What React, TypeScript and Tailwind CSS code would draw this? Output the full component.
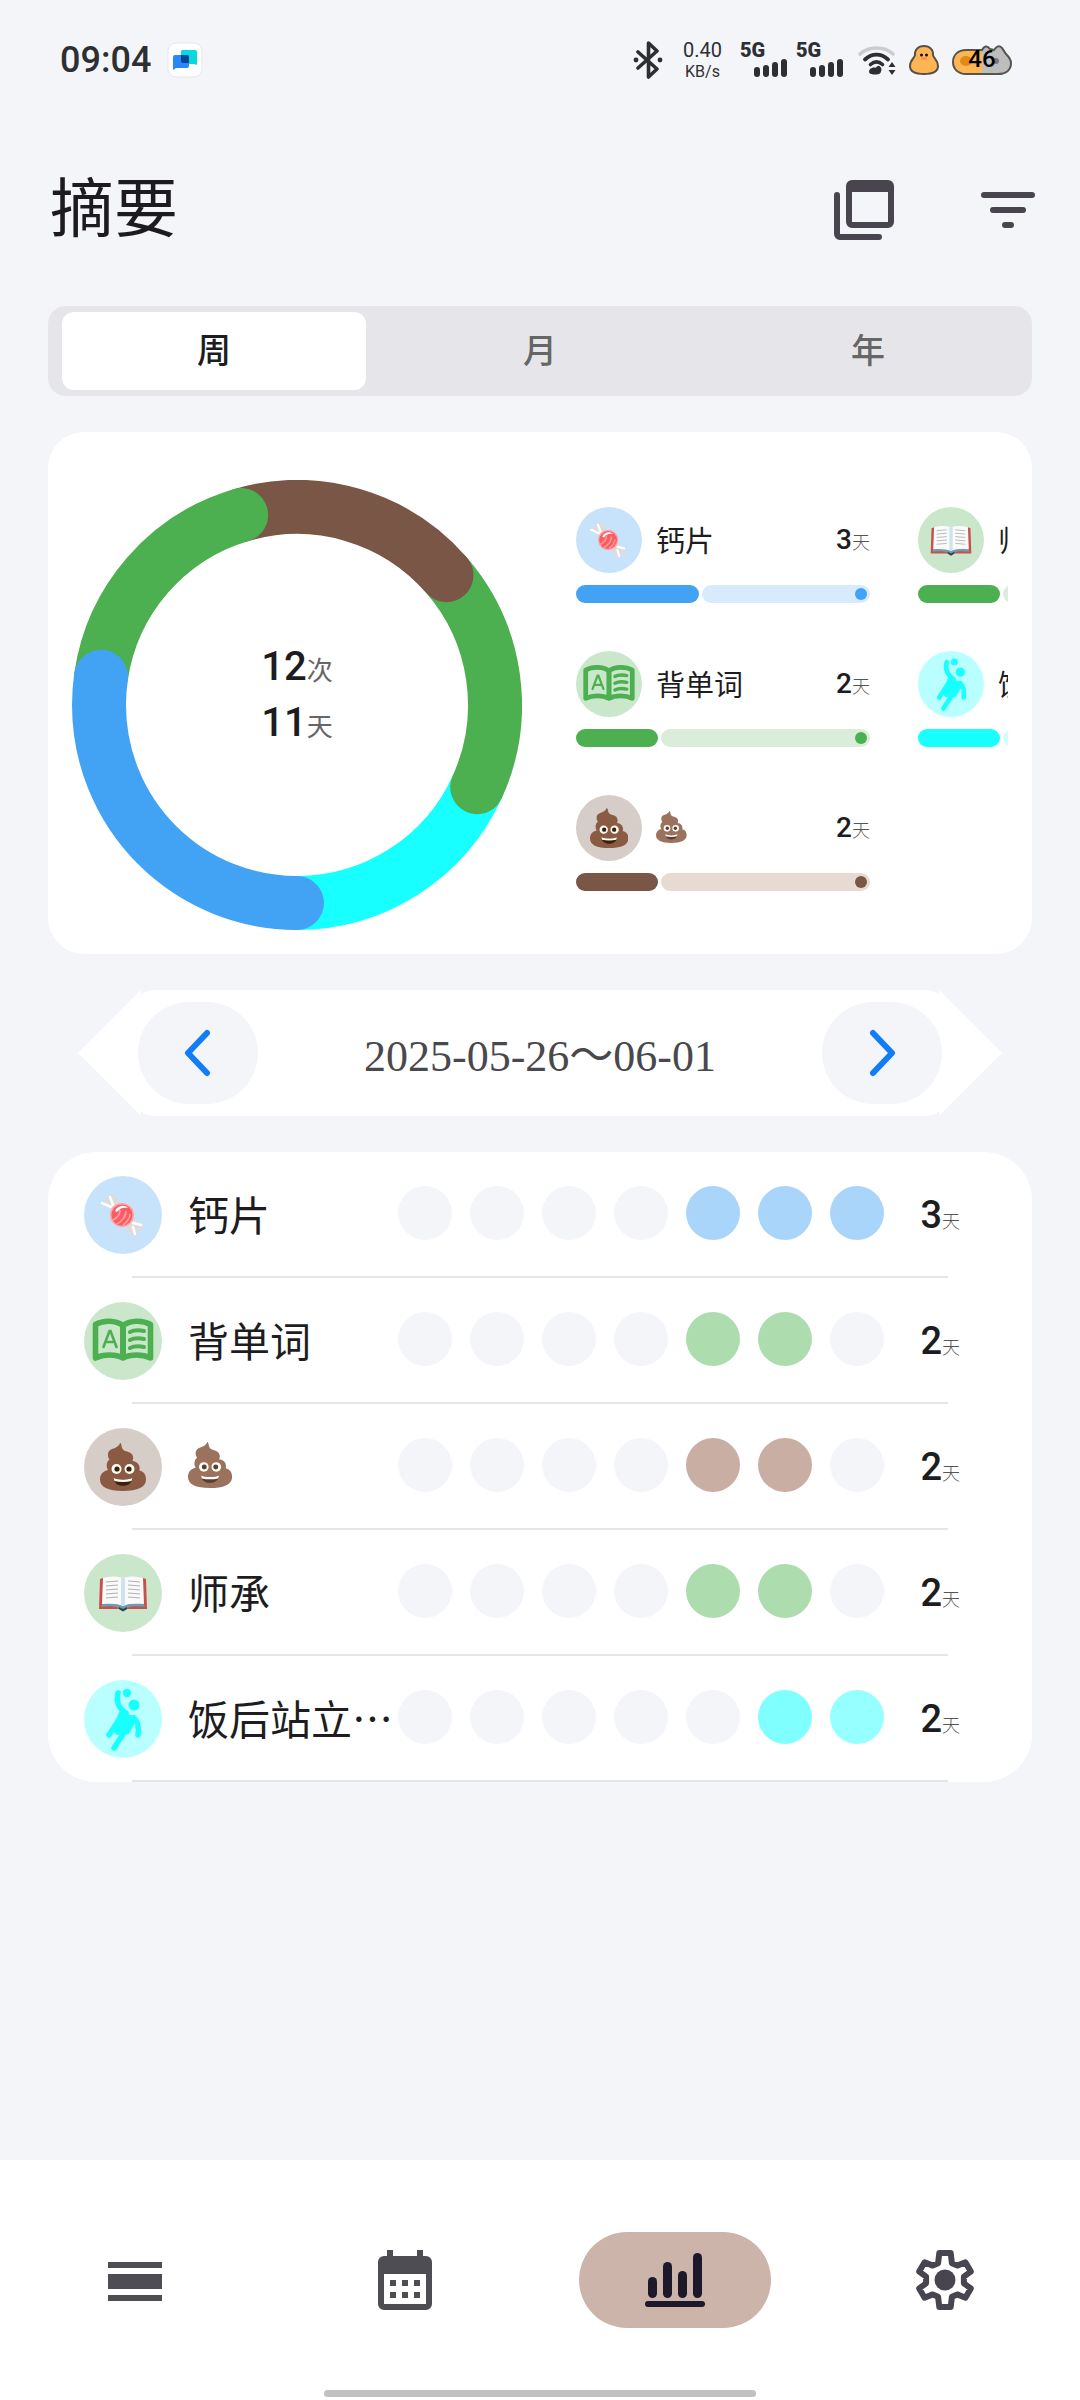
import { useState } from 'react';
import type { ReactNode } from 'react';

type IconName = 'candy' | 'words' | 'poop' | 'book' | 'ball';

type Habit = {
  icon: IconName;
  name: string;
  days: number;
  color: string;
  soft: string;
  track: string;
  week: string[];
};

const EMPTY = '#f3f5f9';

const habits: Habit[] = [
  {
    icon: 'candy',
    name: '钙片',
    days: 3,
    color: '#42a3f5',
    soft: '#c7e3fc',
    track: '#d8ebfd',
    week: [EMPTY, EMPTY, EMPTY, EMPTY, '#a9d5fa', '#a9d5fa', '#a9d5fa'],
  },
  {
    icon: 'words',
    name: '背单词',
    days: 2,
    color: '#4caf50',
    soft: '#cae7cb',
    track: '#d9edda',
    week: [EMPTY, EMPTY, EMPTY, EMPTY, '#addcaf', '#addcaf', EMPTY],
  },
  {
    icon: 'poop',
    name: '💩',
    days: 2,
    color: '#795646',
    soft: '#d6ccc8',
    track: '#e7dad3',
    week: [EMPTY, EMPTY, EMPTY, EMPTY, '#c8aea3', '#c8aea3', EMPTY],
  },
  {
    icon: 'book',
    name: '师承',
    days: 2,
    color: '#4caf50',
    soft: '#cae7cb',
    track: '#d9edda',
    week: [EMPTY, EMPTY, EMPTY, EMPTY, '#addcaf', '#addcaf', EMPTY],
  },
  {
    icon: 'ball',
    name: '饭后站立…',
    days: 2,
    color: '#18ffff',
    soft: '#baffff',
    track: '#d1ffff',
    week: [EMPTY, EMPTY, EMPTY, EMPTY, EMPTY, '#80ffff', '#96ffff'],
  },
];

// clockwise from the top, later arcs lie over the earlier ones
const arcs = [
  { start: 114.5, sweep: 65.5, color: '#18ffff' },
  { start: 49, sweep: 65.5, color: '#4caf50' },
  { start: -16.4, sweep: 65.4, color: '#795646' },
  { start: -81.8, sweep: 65.4, color: '#4caf50' },
  { start: -180, sweep: 98.2, color: '#42a3f5' },
];

const Poop = ({ className }: { className: string }) => (
  <svg viewBox="0 0 46 48" className={className} aria-hidden="true">
    <path
      d="M20 0c2 0 .8 4.600 3.500 7 2.500 2 8.500 1.500 9.500 6.500.4 2 0 3.500-.6 4.500 5 .5 8.200 4 7 9.500 4.500 1 6.600 4 6.600 9C46 44 38 48 23 48S0 44 0 36.500c0-5 3-8.500 8-9.500-2.500-4-1-9 1.500-10.500-2-2.500-2.600-8 1.500-10C16 4.500 19 3.500 20 0Z"
      fill="#8a5a43"
    />
    <circle cx="16.500" cy="26" r="5" fill="#fffdf5" />
    <circle cx="29.500" cy="26" r="5" fill="#fffdf5" />
    <circle cx="17" cy="26" r="2.600" fill="#3b1f0c" />
    <circle cx="29" cy="26" r="2.600" fill="#3b1f0c" />
    <path d="M13.500 35c6 2.200 13 2.200 19 0-.4 5-4.500 7.800-9.500 7.800S14 40 13.500 35Z" fill="#3b1f0c" />
    <path d="M13.500 35c6 2.200 13 2.200 19 0l-1 3c-5.500 1.300-11.500 1.300-17 0Z" fill="#fffdf5" />
  </svg>
);

const Candy = () => (
  <svg viewBox="0 0 78 78" className="size-full" aria-hidden="true">
    <path d="M30 34 17 29l3-3-1-2 4-1 1-4 3 1 3-3 1 4 3 1 1 9Z" fill="#dcdcdc" />
    <path d="m46 44 14 4-2 4 1 2-5 1-1 5-3-1-2 2-2-5-3-2-1-5Z" fill="#dcdcdc" />
    <path d="m18 27 9 4M26 21l3 8M57 49l-8-2M51 58l-2-7" stroke="#fff" strokeWidth="2.600" strokeLinecap="round" />
    <circle cx="38" cy="39" r="12" fill="#ffa3a3" />
    <circle cx="38" cy="39" r="10.500" fill="#fa5c63" />
    <path d="M29 44c4-2 7-6 7-10M33 48c5-3 9-8 9-13M39 49c4-3 7-7 7-11" fill="none" stroke="#ff9a9a" strokeWidth="1.800" />
    <path d="M31 35c2-5 9-7 13-3-5-1-8 0-11 4Z" fill="#fff" />
  </svg>
);

const WordsBook = () => (
  <svg viewBox="0 0 78 78" className="size-full" aria-hidden="true">
    <path
      d="M11.500 22.500c8-4.500 20-4.500 27.500 1 7.500-5.500 19.500-5.500 27.500-1V56c-8-4-20-4-27.500 0-7.500-4-19.500-4-27.500 0Z"
      fill="none"
      stroke="#4caf50"
      strokeWidth="5.600"
      strokeLinejoin="round"
    />
    <path d="M39 24v33" stroke="#4caf50" strokeWidth="6" />
    <path d="m19.500 45 6-16h1l6 16M22 40h8" fill="none" stroke="#4caf50" strokeWidth="2.600" strokeLinecap="round" />
    <path d="M46 30c4-2 9-2 14-1M46 38c4-2 9-2 14-1M46 46c4-2 9-2 14-1" fill="none" stroke="#4caf50" strokeWidth="4" strokeLinecap="round" />
  </svg>
);

const OpenBook = () => (
  <svg viewBox="0 0 78 78" className="size-full" aria-hidden="true">
    <path d="m16 25 3-1v27l40-1V24l3 1 1 30H43l-4 2-4-2H15Z" fill="#c8504c" />
    <path d="m19 49 20 2 20-2 2 4c-8-1-14-1-18 1l-4 2-4-2c-5-2-11-2-18-1Z" fill="#6f9bb5" />
    <path d="M19 24c7-2 14-2 20 0 6-2 13-2 20 0l1 26c-8-1-15-1-21 2-6-3-13-3-21-2Z" fill="#fafafa" />
    <path d="M37 23.500 39 24l2-.5V51l-2 1-2-1Z" fill="#cfe3ee" />
    <path
      d="M22 28l12-1M22 32l12-1M22 36l12-1M22 40l12-1M22 44l12-1M44 27l12 1M44 31l12 1M44 35l12 1M44 39l12 1M44 43l12 1"
      stroke="#b0b0b0"
      strokeWidth="1"
    />
    <path d="m35 53 4 2 4-2v2l-4 2.500-4-2.500Z" fill="#29434e" />
  </svg>
);

const BallPlayer = () => (
  <svg viewBox="0 0 78 78" className="size-full" aria-hidden="true">
    <circle cx="43" cy="13" r="4.200" fill="#18ffff" />
    <circle cx="50" cy="25" r="5.500" fill="#18ffff" />
    <path d="M34 13c-2 8 0 15 8 20" fill="none" stroke="#18ffff" strokeWidth="5.500" strokeLinecap="round" />
    <path d="M36 30c5 3 9 6 14 5l2 6-7 13-12 1-5-5Z" fill="#18ffff" />
    <path d="M50 38c4 4 5 10 4 17" fill="none" stroke="#18ffff" strokeWidth="5.500" strokeLinecap="round" />
    <path d="M36 38 25 55M43 48 30 68" stroke="#18ffff" strokeWidth="5.500" strokeLinecap="round" />
  </svg>
);

const HabitIcon = ({ habit, size }: { habit: Habit; size: 'sm' | 'lg' }) => (
  <span
    className={
      size === 'lg'
        ? 'flex size-[78px] shrink-0 items-center justify-center rounded-full'
        : 'flex size-[66px] shrink-0 items-center justify-center rounded-full'
    }
    style={{ backgroundColor: habit.soft }}
  >
    {habit.icon === 'candy' && <Candy />}
    {habit.icon === 'words' && <WordsBook />}
    {habit.icon === 'book' && <OpenBook />}
    {habit.icon === 'ball' && <BallPlayer />}
    {habit.icon === 'poop' && <Poop className={size === 'lg' ? 'h-12' : 'h-10'} />}
  </span>
);

const Days = ({ days, className }: { days: number; className: string }) => (
  <span className="flex shrink-0 items-baseline whitespace-nowrap">
    <span className={className}>{days}</span>
    <span className="text-[18px] font-light text-[#555]">天</span>
  </span>
);

const Signal = () => (
  <span className="flex h-9 w-[48px] flex-col">
    <span className="text-[20px] leading-4 font-black">5G</span>
    <svg viewBox="0 0 34 20" className="h-5 w-[34px] self-end" fill="#2e2f33" aria-hidden="true">
      <rect x="0" y="9" width="6" height="10" rx="3" />
      <rect x="9" y="7" width="6" height="12" rx="3" />
      <rect x="18" y="4" width="6" height="15" rx="3" />
      <rect x="27" y="1" width="6" height="18" rx="3" />
    </svg>
  </span>
);

const StatusBar = () => (
  <div className="flex h-[120px] items-center justify-between pr-[68px] pl-[60px] text-[#2e2f33]">
    <div className="flex items-center gap-4">
      <span className="text-[36px] leading-none font-medium">09:04</span>
      <svg viewBox="0 0 36 36" className="size-9" aria-hidden="true">
        <rect x="1" y="1" width="34" height="34" rx="8" fill="#fff" stroke="#e6e7ea" />
        <path d="M15 8h13a2 2 0 0 1 2 2v13l-3-1H16a2 2 0 0 1-2-2V9Z" fill="#04dadd" />
        <path d="M8 13h12a2 2 0 0 1 2 2v9a2 2 0 0 1-2 2H9l-3 2V15a2 2 0 0 1 2-2Z" fill="#2a86fb" />
        <path d="M14 13h6a2 2 0 0 1 2 2v6h-6a2 2 0 0 1-2-2Z" fill="#04459c" />
      </svg>
    </div>
    <div className="flex items-center">
      <svg viewBox="0 0 30 38" className="h-[38px] w-[30px]" aria-hidden="true">
        <path d="m5 11 19 17-8.500 8V2L24 10 5 27" fill="none" stroke="#2e2f33" strokeWidth="3.600" strokeLinejoin="round" strokeLinecap="round" />
        <circle cx="3" cy="19" r="2.400" fill="#2e2f33" />
        <circle cx="27" cy="19" r="2.400" fill="#2e2f33" />
      </svg>
      <span className="ml-5 flex flex-col items-center text-[20px] leading-6">
        <span>0.40</span>
        <span className="text-[16px] leading-5">KB/s</span>
      </span>
      <span className="ml-[18px] flex gap-2">
        <Signal />
        <Signal />
      </span>
      <svg viewBox="0 0 38 32" className="ml-[14px] h-8 w-[38px]" fill="none" strokeLinecap="round" aria-hidden="true">
        <path d="M2 10c9-8 24-8 33 0" stroke="#cbccd0" strokeWidth="3.600" />
        <path d="M7 15.500c7-6.500 16-6.500 23 0" stroke="#2e2f33" strokeWidth="3.800" />
        <path d="M12.500 20.500c4-3.500 8-3.500 12 0" stroke="#2e2f33" strokeWidth="3.600" />
        <path d="M14 24c2-1 3 0 4-.5 1-1 3-2.500 4-1 1.500 1 2 3 1 5-.5 3-4 3-6 3s-6 0-6-3c0-1.500 1-3 3-3.500Z" fill="#2e2f33" />
        <path d="m34 18 3.500 5h-7ZM34 31l3.500-5h-7Z" fill="#2e2f33" />
      </svg>
      <svg viewBox="0 0 32 32" className="ml-3 size-8" aria-hidden="true">
        <path d="M16 2c6 0 9.500 4 9 9 0 2.500 5 5 5 11s-5 8-14 8-14-2-14-8 5-8.500 5-11c-.5-5 3-9 9-9Z" fill="#ffb552" stroke="#55504b" strokeWidth="2" />
        <circle cx="13.500" cy="11" r="1.500" fill="#111" />
        <circle cx="18.500" cy="11" r="1.500" fill="#111" />
        <ellipse cx="16" cy="14.500" rx="3" ry="1.400" fill="#ff8a5c" />
      </svg>
      <span className="relative ml-3 block h-8 w-[60px]">
        <svg viewBox="0 0 60 32" className="h-8 w-[60px]" aria-hidden="true">
          <path d="M14 6h16c2-4 5-5 8-1l4 1c3-4 5-5 8-2l4 6c3 3 5 5 5 9 0 7-5 11-13 11H14C6 30 1 25 1 18S6 6 14 6Z" fill="#bdbdbd" />
          <path d="M14 6h16v24H14C6 30 1 25 1 18S6 6 14 6Z" fill="#ffb552" />
          <ellipse cx="14" cy="17" rx="6" ry="5" fill="#e08a1c" />
          <circle cx="44" cy="17" r="3" fill="#777" />
          <path d="M14 6h16c2-4 5-5 8-1l4 1c3-4 5-5 8-2l4 6c3 3 5 5 5 9 0 7-5 11-13 11H14C6 30 1 25 1 18S6 6 14 6Z" fill="none" stroke="#55544f" strokeWidth="2" />
        </svg>
        <span className="absolute inset-0 text-center text-[24px] leading-[30px] font-medium text-black">46</span>
      </span>
    </div>
  </div>
);

const Donut = () => (
  <div className="relative aspect-square w-[450px] shrink-0">
    <svg viewBox="0 0 450 450" className="size-full" aria-hidden="true">
      {arcs.map((arc) => (
        <circle
          key={arc.start}
          cx="225"
          cy="225"
          r="198"
          fill="none"
          stroke={arc.color}
          strokeWidth="54"
          strokeLinecap="round"
          pathLength={360}
          strokeDasharray={`${arc.sweep} 360`}
          transform={`rotate(${arc.start - 90} 225 225)`}
        />
      ))}
    </svg>
    <div className="absolute inset-0 flex flex-col items-center justify-center pb-5 text-[#1d1d1f]">
      <p className="text-[40px] leading-[56px] font-medium">
        12<span className="text-[26px] leading-none font-normal text-[#666]">次</span>
      </p>
      <p className="text-[40px] leading-[56px] font-medium">
        11<span className="text-[26px] leading-none font-normal text-[#666]">天</span>
      </p>
    </div>
  </div>
);

const SummaryItem = ({ habit }: { habit: Habit }) => (
  <li className="flex flex-col gap-3">
    <div className="flex items-center">
      <HabitIcon habit={habit} size="sm" />
      <span className="ml-[14px] flex-1 pb-[2px] font-['Noto_Sans_CJK_SC',sans-serif] text-[29px] leading-[44px] whitespace-nowrap text-[#1d1d1f]">
        {habit.icon === 'poop' ? <Poop className="h-8 opacity-85" /> : habit.name}
      </span>
      <Days days={habit.days} className="text-[28px] leading-9 font-medium text-[#1d1d1f]" />
    </div>
    <div className="flex h-[18px] gap-[3px]">
      <span className="rounded-full" style={{ backgroundColor: habit.color, width: `${(habit.days / 7) * 98}%` }} />
      <span className="flex flex-1 items-center justify-end rounded-full pr-[3px]" style={{ backgroundColor: habit.track }}>
        <span className="size-3 rounded-full" style={{ backgroundColor: habit.color }} />
      </span>
    </div>
  </li>
);

const HabitRow = ({ habit }: { habit: Habit }) => (
  <li>
    <div className="flex h-[124px] items-center pt-[2px] pr-[72px] pl-9">
      <HabitIcon habit={habit} size="lg" />
      <span className="ml-[26px] min-w-0 flex-1 overflow-hidden pb-1 font-['Noto_Sans_CJK_SC',sans-serif] text-[41px] leading-[60px] whitespace-nowrap text-[#1d1d1f]">
        {habit.icon === 'poop' ? <Poop className="h-[46px] opacity-85" /> : habit.name}
      </span>
      <span className="flex gap-[18px] pb-1">
        {habit.week.map((color, i) => (
          <span key={i} className="size-[54px] rounded-full" style={{ backgroundColor: color }} />
        ))}
      </span>
      <span className="ml-9">
        <Days days={habit.days} className="text-[38px] leading-[52px] font-medium text-[#1d1d1f]" />
      </span>
    </div>
    <div className="mr-[84px] ml-[84px] h-[2px] bg-[#e6e6e8]" />
  </li>
);

const NavIcon = ({ children, color = '#4f4d54' }: { children: ReactNode; color?: string }) => (
  <svg viewBox="0 0 24 24" className="size-[72px]" fill={color} aria-hidden="true">
    {children}
  </svg>
);

const navItems = [
  {
    label: '列表',
    icon: (
      <NavIcon>
        <path d="M3 6h18v2H3zM3 10h18v5H3zM3 17h18v2H3z" />
      </NavIcon>
    ),
  },
  {
    label: '日历',
    icon: (
      <NavIcon>
        <path
          fillRule="evenodd"
          d="M6 2h2v2h8V2h2v2h1a2 2 0 0 1 2 2v14a2 2 0 0 1-2 2H5a2 2 0 0 1-2-2V6a2 2 0 0 1 2-2h1ZM5 10v10h14V10Z"
        />
        <path d="M7 12h2v2H7zM11 12h2v2h-2zM15 12h2v2h-2zM7 16h2v2H7zM11 16h2v2h-2zM15 16h2v2h-2z" />
      </NavIcon>
    ),
  },
  {
    label: '摘要',
    icon: (
      <NavIcon color="#1d192b">
        <rect x="3" y="11" width="3" height="7" rx="1.500" />
        <rect x="8" y="6" width="3" height="12" rx="1.500" />
        <rect x="13" y="9" width="3" height="9" rx="1.500" />
        <rect x="18" y="3" width="3" height="15" rx="1.500" />
        <rect x="2" y="19" width="20" height="2" rx="1" />
      </NavIcon>
    ),
  },
  {
    label: '设置',
    icon: (
      <NavIcon color="#49454f">
        <path
          d="M10.100 3h3.800l.4 3.400 1.800.8 2.700-1.100 1.800 3.100-2.300 1.700v2.200l2.300 1.700-1.800 3.100-2.700-1.100-1.800.8-.4 3.400h-3.800l-.4-3.400-1.800-.8-2.700 1.100-1.800-3.100 2.300-1.700v-2.200L3.400 9.200l1.800-3.100 2.700 1.100 1.800-.8Z"
          fill="none"
          stroke="#49454f"
          strokeWidth="2"
          strokeLinejoin="round"
        />
        <circle cx="12" cy="12" r="3.500" />
      </NavIcon>
    ),
  },
];

const App = () => {
  const [period, setPeriod] = useState('周');
  const [page, setPage] = useState('摘要');

  return (
    <div className="flex min-h-screen flex-col bg-[#f3f5f9] font-['Roboto','Noto_Sans_CJK_SC',sans-serif]">
      <StatusBar />

      <header className="flex h-[180px] items-center justify-between pr-9 pl-[50px]">
        <h1 className="text-[64px] leading-none text-[#1d1b20]">摘要</h1>
        <div className="flex gap-[72px]">
          <button type="button" aria-label="窗口">
            <NavIcon color="#49454f">
              <path fillRule="evenodd" d="M8 2h12a2 2 0 0 1 2 2v12a2 2 0 0 1-2 2H8a2 2 0 0 1-2-2V4a2 2 0 0 1 2-2Zm0 4v10h12V6Z" />
              <path d="M2 7a1 1 0 0 1 2 0v13h13a1 1 0 0 1 0 2H4a2 2 0 0 1-2-2Z" />
            </NavIcon>
          </button>
          <button type="button" aria-label="筛选">
            <NavIcon color="#49454f">
              <rect x="3" y="6" width="18" height="2" rx="1" />
              <rect x="6" y="11" width="12" height="2" rx="1" />
              <rect x="10" y="16" width="4" height="2" rx="1" />
            </NavIcon>
          </button>
        </div>
      </header>

      <main className="flex flex-col gap-9 px-12 pt-[6px]">
        <div className="grid h-[90px] grid-cols-3 rounded-[18px] bg-[#e6e6ea]">
          {['周', '月', '年'].map((item) => (
            <button
              key={item}
              type="button"
              onClick={() => setPeriod(item)}
              className={
                period === item
                  ? 'my-[6px] mr-[10px] ml-[14px] rounded-xl bg-white text-[34px] font-medium text-[#1d1d1f]'
                  : 'mx-3 my-[6px] rounded-xl text-[34px] font-medium text-[#666]'
              }
            >
              {item}
            </button>
          ))}
        </div>

        <section className="flex items-center gap-[54px] rounded-[36px] bg-white px-6 pt-12 pb-6">
          <Donut />
          <ul className="grid min-w-0 flex-1 auto-cols-[294px] grid-flow-col grid-rows-3 gap-12 overflow-hidden pb-3">
            {habits.map((habit) => (
              <SummaryItem key={habit.name} habit={habit} />
            ))}
          </ul>
        </section>

        {/* the body stays above the two arrow tips, which reach under it */}
        <div className="flex items-center px-[30px]">
          <span className="-mr-[15px] h-[126px] w-[63px] shrink-0 bg-white [clip-path:polygon(100%_0,100%_100%,0_50%)]" />
          <div className="z-10 flex h-[126px] flex-1 items-center justify-between rounded-[30px] bg-white px-3">
            <button type="button" aria-label="上一周" className="flex h-[102px] w-[120px] items-center justify-center rounded-full bg-[#f3f5f9]">
              <svg viewBox="0 0 30 48" className="h-12 w-[30px]" aria-hidden="true">
                <path d="M24 4 5 24l19 20" fill="none" stroke="#127df7" strokeWidth="6" strokeLinecap="round" strokeLinejoin="round" />
              </svg>
            </button>
            <span className="pt-2 font-['Liberation_Serif','Noto_Sans_CJK_SC',serif] text-[44px] leading-none text-[#49494d]">
              2025-05-26～06-01
            </span>
            <button type="button" aria-label="下一周" className="flex h-[102px] w-[120px] items-center justify-center rounded-full bg-[#f3f5f9]">
              <svg viewBox="0 0 30 48" className="h-12 w-[30px]" aria-hidden="true">
                <path d="m6 4 19 20L6 44" fill="none" stroke="#127df7" strokeWidth="6" strokeLinecap="round" strokeLinejoin="round" />
              </svg>
            </button>
          </div>
          <span className="-ml-[15px] h-[126px] w-[63px] shrink-0 bg-white [clip-path:polygon(0_0,0_100%,100%_50%)]" />
        </div>

        <ul className="rounded-[48px] bg-white">
          {habits.map((habit) => (
            <HabitRow key={habit.name} habit={habit} />
          ))}
        </ul>
      </main>

      <nav className="mt-auto flex flex-col items-center bg-white pt-[72px]">
        <div className="grid w-full grid-cols-4">
          {navItems.map((item) => (
            <button
              key={item.label}
              type="button"
              aria-label={item.label}
              onClick={() => setPage(item.label)}
              className={
                page === item.label
                  ? 'mx-auto flex h-24 w-[192px] items-center justify-center rounded-full bg-[#ccb4aa]'
                  : 'mx-auto flex h-24 w-[192px] items-center justify-center rounded-full'
              }
            >
              {item.icon}
            </button>
          ))}
        </div>
        <div className="mt-[62px] mb-[3px] h-[7px] w-2/5 rounded-full bg-[#c1c1c1]" />
      </nav>
    </div>
  );
};

export default App;
